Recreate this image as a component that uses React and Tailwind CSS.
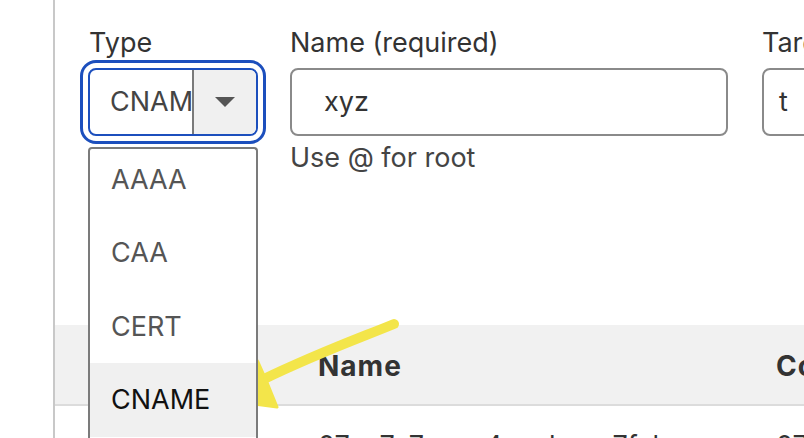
const OPTIONS = ["AAAA", "CAA", "CERT", "CNAME"];

function Arrow() {
  return (
    <svg
      className="absolute inset-0 pointer-events-none"
      width="804"
      height="438"
      viewBox="0 0 804 438"
    >
      <path
        d="M394 324 C 360 338, 320 352, 262 380"
        stroke="#f3e54a"
        strokeWidth="10"
        strokeLinecap="round"
        fill="none"
      />
      <path
        d="M252 352 L 258 362 L 266 380 L 277 407 L 262 405 L 244 403 L 221 397 L 234 378 Z"
        fill="#f3e54a"
        stroke="#f3e54a"
        strokeWidth="3"
        strokeLinejoin="round"
      />
    </svg>
  );
}

export default function App() {
  return (
    <div className="relative flex w-[804px] h-[438px] overflow-hidden bg-white font-['Inter',sans-serif] text-[#333]">
      <div className="w-[55px] shrink-0 border-r-2 border-[#c8c8c8]" />
      <div className="flex-1 min-w-0 flex flex-col">
        <div className="h-[325px] shrink-0 pl-[33px] pt-[27px] flex items-start gap-[32px]">
          <div className="relative w-[170px] shrink-0">
            <div className="text-[27px] leading-[32px] pl-[1px]">Type</div>
            <div className="mt-[9px] h-[68px] flex border-2 border-[#1c4fbd] rounded-[8px] outline-3 outline-[#1c4fbd] outline-offset-[5px] overflow-hidden">
              <div className="w-[102px] pl-[20px] flex items-center overflow-hidden whitespace-nowrap text-[27px] text-[#444]">
                CNAME
              </div>
              <div className="flex-1 border-l-2 border-[#7a7a7a] bg-[#f0f0f0] flex items-center justify-center">
                <span className="w-0 h-0 border-l-[10px] border-r-[10px] border-t-[10px] border-l-transparent border-r-transparent border-t-[#555]" />
              </div>
            </div>
            <div className="absolute z-10 left-0 top-[120px] w-[170px] h-[400px] bg-white border-2 border-b-0 border-[#7b7b7b] rounded-t-[4px] overflow-hidden">
              <div className="-mt-[6.5px]">
                {OPTIONS.map((o) => (
                  <div
                    key={o}
                    className={`h-[73.5px] leading-[73.5px] pl-[21px] text-[27px] ${
                      o === "CNAME" ? "bg-[#f0f0f0] text-[#111]" : "text-[#555]"
                    }`}
                  >
                    {o}
                  </div>
                ))}
              </div>
            </div>
          </div>

          <div className="w-[438px] shrink-0">
            <div className="text-[27px] leading-[32px]">Name (required)</div>
            <div className="mt-[9px] h-[68px] flex items-center border-2 border-[#8a8a8a] rounded-[8px] pl-[32px] text-[27px]">
              xyz
            </div>
            <div className="mt-[6px] text-[27px] leading-[32px] text-[#444]">
              Use @ for root
            </div>
          </div>

          <div className="ml-[2px] w-[300px] shrink-0">
            <div className="text-[27px] leading-[32px] whitespace-nowrap">Target</div>
            <div className="mt-[9px] h-[68px] flex items-center border-2 border-[#8a8a8a] rounded-[8px] pl-[15px] text-[27px] whitespace-nowrap">
              t
            </div>
          </div>
        </div>

        <div className="h-[81px] shrink-0 flex items-center pt-[3px] bg-[#f1f1f1] border-b-2 border-[#dcdcdc] font-bold text-[28px] tracking-[1px] text-[#333]">
          <div className="pl-[263px] w-[721px] shrink-0">Name</div>
          <div className="whitespace-nowrap">Content</div>
        </div>
        <div className="flex pt-[24px] text-[27px] leading-[32px] text-[#333] whitespace-nowrap">
          <div className="pl-[263px] w-[721px] shrink-0 overflow-hidden">07ae7c7eaec4eacbeae7fcbe</div>
          <div>07ae4c</div>
        </div>
      </div>
      <Arrow />
    </div>
  );
}
